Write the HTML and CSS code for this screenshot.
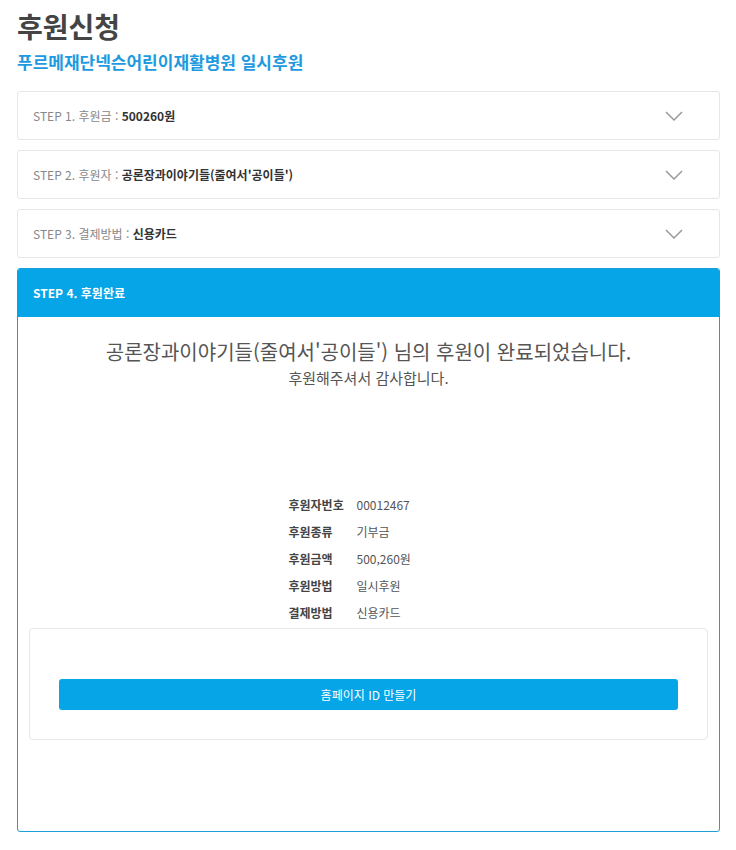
FILE: index.html
```html
<!DOCTYPE html>
<html lang="ko">
<head>
<meta charset="utf-8">
<title>후원신청</title>
<link rel="stylesheet" href="styles.css">
</head>
<body>
<div class="page">
  <h1 class="title">후원신청</h1>
  <h2 class="subtitle">푸르메재단넥슨어린이재활병원 일시후원</h2>

  <div class="step">
    <div class="step-text"><span class="step-label">STEP 1. 후원금 : </span><span class="step-value">500260원</span></div>
    <svg class="chev" width="18" height="10" viewBox="0 0 18 10"><polyline points="1,1 9,9 17,1" fill="none" stroke="#999" stroke-width="1.5"/></svg>
  </div>
  <div class="step">
    <div class="step-text"><span class="step-label">STEP 2. 후원자 : </span><span class="step-value">공론장과이야기들(줄여서'공이들')</span></div>
    <svg class="chev" width="18" height="10" viewBox="0 0 18 10"><polyline points="1,1 9,9 17,1" fill="none" stroke="#999" stroke-width="1.5"/></svg>
  </div>
  <div class="step">
    <div class="step-text"><span class="step-label">STEP 3. 결제방법 : </span><span class="step-value">신용카드</span></div>
    <svg class="chev" width="18" height="10" viewBox="0 0 18 10"><polyline points="1,1 9,9 17,1" fill="none" stroke="#999" stroke-width="1.5"/></svg>
  </div>

  <div class="done">
    <div class="done-head">STEP 4. 후원완료</div>
    <div class="done-body">
      <p class="msg">공론장과이야기들(줄여서'공이들') 님의 후원이 완료되었습니다.</p>
      <p class="thanks">후원해주셔서 감사합니다.</p>
      <dl class="info">
        <dt>후원자번호</dt><dd>00012467</dd>
        <dt>후원종류</dt><dd>기부금</dd>
        <dt>후원금액</dt><dd>500,260원</dd>
        <dt>후원방법</dt><dd>일시후원</dd>
        <dt>결제방법</dt><dd>신용카드</dd>
      </dl>
      <div class="join-box">
        <button class="join-btn" type="button">홈페이지 ID 만들기</button>
      </div>
    </div>
  </div>
</div>
</body>
</html>
```

FILE: styles.css
```css
* { box-sizing: border-box; }
html, body { margin: 0; padding: 0; background: #fff; }
body {
  font-family: "Noto Sans CJK KR", "Noto Sans", sans-serif;
  color: #444;
}
.page {
  padding: 8px 16px 0 17px;
}
.title {
  margin: 0;
  font-size: 28px;
  line-height: 36px;
  font-weight: 700;
  color: #444;
}
.subtitle {
  margin: 6px 0 17px;
  font-size: 17px;
  line-height: 24px;
  font-weight: 700;
  color: #1d9ae0;
}
.step {
  height: 49px;
  border: 1px solid #e6e6e6;
  border-radius: 3px;
  margin-bottom: 10px;
  display: flex;
  align-items: center;
  justify-content: space-between;
  padding: 0 36px 0 15px;
}
.step-text { font-size: 12px; line-height: 18px; }
.step-label { color: #888; }
.step-value { color: #333; font-weight: 700; }
.chev { display: block; }
.done {
  border: 1px solid #1b9fd6;
  border-radius: 3px;
  overflow: hidden;
}
.done-head {
  background: #05a5e7;
  color: #fff;
  font-size: 12px;
  font-weight: 700;
  height: 48px;
  line-height: 48px;
  padding-left: 15px;
}
.done-body {
  padding: 20px 11px 91px 11px;
}
.msg {
  margin: 0;
  text-align: center;
  font-size: 20px;
  line-height: 30px;
  color: #555;
}
.thanks {
  margin: 0;
  text-align: center;
  font-size: 15px;
  line-height: 22px;
  color: #555;
}
.info {
  display: grid;
  grid-template-columns: 68px 92px;
  width: 160px;
  margin: 102px auto 2px;
  font-size: 12px;
  line-height: 27px;
}
.info dt { font-weight: 700; color: #444; margin: 0; }
.info dd { margin: 0; color: #555; }
.join-box {
  border: 1px solid #e8e8e8;
  border-radius: 4px;
  padding: 50px 29px 29px;
}
.join-btn {
  display: block;
  width: 100%;
  height: 31px;
  border: 0;
  border-radius: 3px;
  background: #05a5e7;
  color: #fff;
  font-family: inherit;
  font-size: 12px;
}
```
